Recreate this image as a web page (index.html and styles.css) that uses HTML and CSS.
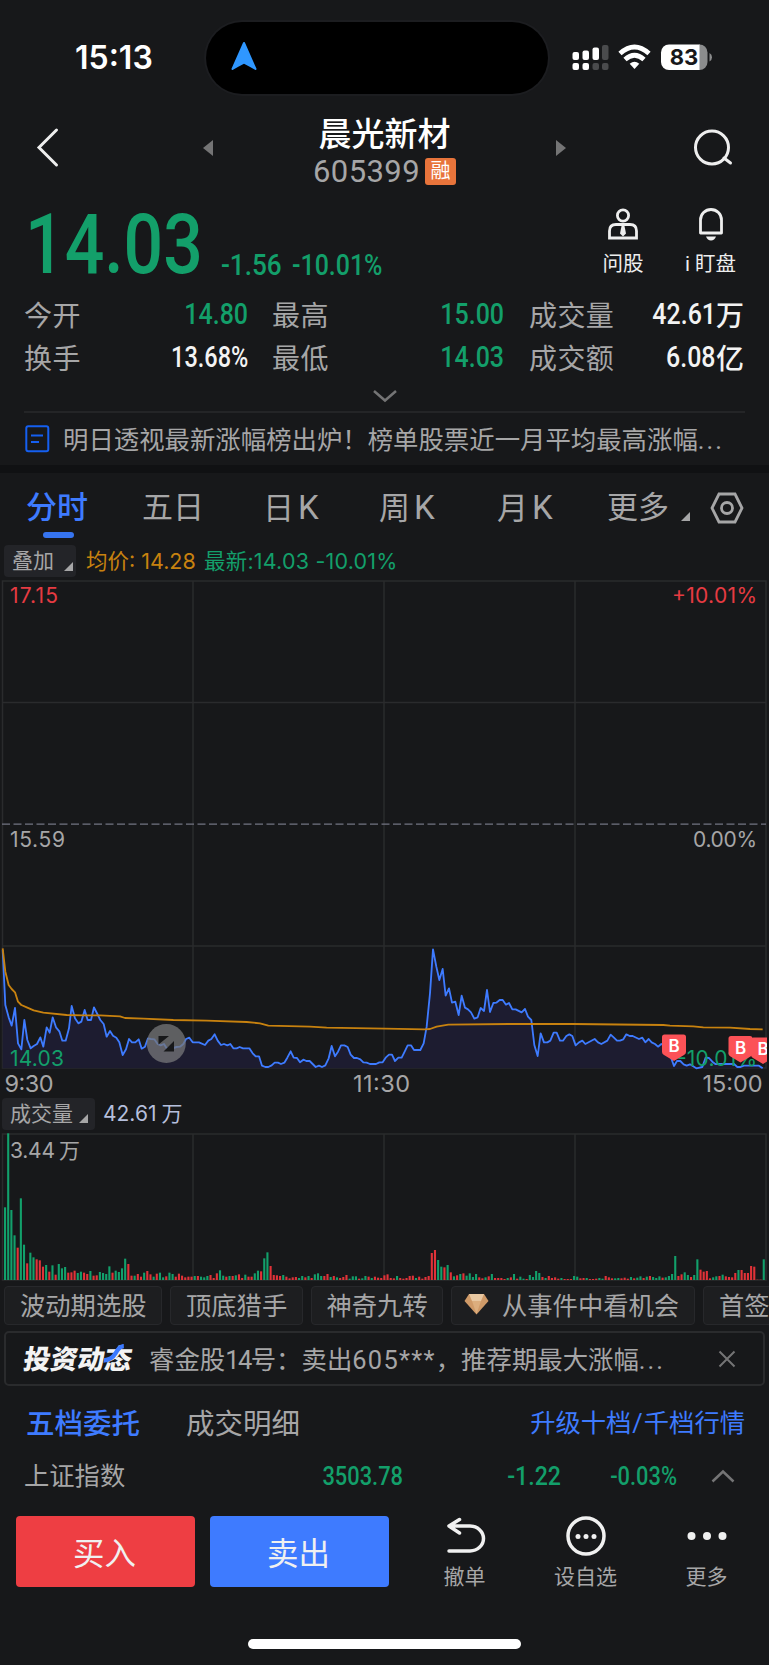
FILE: index.html
```html
<!DOCTYPE html>
<html lang="zh-CN">
<head>
  <meta charset="UTF-8">
  <meta name="viewport" content="width=device-width, initial-scale=1.0">
  <title>晨光新材 605399</title>
  <link rel="stylesheet" href="styles.css">
</head>
<body>
  <div class="status-bar">
    <div class="time">15:13</div>
    <div class="island">
      <svg width="26" height="30" viewBox="0 0 26 30"><path d="M13 2 L24.5 28 Q19 24.500 13 21.500 Q7 24.500 1.500 28 Z" fill="#2f97ff" stroke="#2f97ff" stroke-width="2" stroke-linejoin="round"/></svg>
    </div>
    <svg class="status-icons" width="142" height="30" viewBox="0 0 142 30">
      <g fill="#fff">
        <rect x="1.500" y="9" width="6.500" height="8" rx="2"/>
        <rect x="11.500" y="7.500" width="6.500" height="9.500" rx="2"/>
        <rect x="21.500" y="4.500" width="6.500" height="12.500" rx="2"/>
        <rect x="1.500" y="20" width="6.500" height="7" rx="2"/>
        <rect x="11.500" y="20" width="6.500" height="7" rx="2"/>
      </g>
      <g fill="#4a4b4d">
        <rect x="31" y="2" width="6.500" height="15" rx="2"/>
        <rect x="21.500" y="20" width="6.500" height="7" rx="2"/>
        <rect x="31" y="20" width="6.500" height="7" rx="2"/>
      </g>
      <g fill="none" stroke="#fff" stroke-width="4.800">
        <path d="M49 10.500 Q63.500 -2.500 78 10.500"/>
        <path d="M54 16.500 Q63.500 8 73 16.500"/>
      </g>
      <path d="M58.700 20.800 Q63.500 16.600 68.300 20.800 L63.500 26 Z" fill="#fff"/>
      <path d="M98 1.500 h31 v25.500 h-31 a8 8 0 0 1 -8 -8 v-9.500 a8 8 0 0 1 8 -8z" fill="#fff"/>
      <path d="M128.500 1.500 a8 8 0 0 1 8 8 v9.500 a8 8 0 0 1 -8 8z" fill="#8b8c8d"/>
      <path d="M138.500 10 q2.500 1.500 2.500 4.300 q0 2.800 -2.500 4.300z" fill="#8b8c8d"/>
      <text class="battery" x="113" y="22.300" text-anchor="middle">83</text>
    </svg>
  </div>

  <div class="header">
    <svg class="back" width="24" height="42" viewBox="0 0 24 42"><path d="M21.500 4 L4 21.500 L21.500 39"/></svg>
    <svg class="prev" width="10" height="18" viewBox="0 0 10 18"><path d="M10 1 L0 9 L10 17Z"/></svg>
    <div class="title">
      <h1>晨光新材</h1>
      <div class="code">605399<span class="badge">融</span></div>
    </div>
    <svg class="next" width="10" height="18" viewBox="0 0 10 18"><path d="M0 1 L10 9 L0 17Z"/></svg>
    <svg class="search" width="44" height="40" viewBox="0 0 44 40"><circle cx="20" cy="19.500" r="16.500"/><path d="M32 30 L38.500 35"/></svg>
  </div>

  <div class="quote">
    <span class="price">14.03</span>
    <span class="change">-1.56</span>
    <span class="percent">-10.01%</span>
    <div class="tool ask">
      <svg width="34" height="36" viewBox="0 0 34 36">
        <g fill="none" stroke="#eee" stroke-width="2.800">
          <circle cx="17" cy="9.500" r="5.600"/>
          <path d="M3.500 32 V25 Q3.500 18.500 10 18.500 H24 Q30.500 18.500 30.500 25 V32 Z"/>
        </g>
        <path d="M15.500 20 h3 l1.500 7.500 l-3 3 l-3 -3z" fill="#eee"/>
      </svg>
      <span>问股</span>
    </div>
    <div class="tool watch">
      <svg width="34" height="36" viewBox="0 0 34 36">
        <path d="M6.500 27 V14 a10.500 10.500 0 0 1 21 0 V27 Z" fill="none" stroke="#eee" stroke-width="2.800" stroke-linejoin="round"/>
        <path d="M12 30.500 h10 q-1.500 4 -5 4 t-5 -4z" fill="#eee"/>
      </svg>
      <span>i<i>盯盘</i></span>
    </div>
  </div>

  <div class="stats">
    <div class="stat"><label>今开</label><b class="green">14.80</b></div>
    <div class="stat"><label>最高</label><b class="green">15.00</b></div>
    <div class="stat"><label>成交量</label><b>42.61</b><i>万</i></div>
    <div class="stat"><label>换手</label><b class="tight">13.68%</b></div>
    <div class="stat"><label>最低</label><b class="green">14.03</b></div>
    <div class="stat"><label>成交额</label><b>6.08</b><i>亿</i></div>
  </div>
  <div class="expand">
    <svg width="26" height="14" viewBox="0 0 26 14"><path d="M2 2 L13 11.500 L24 2"/></svg>
  </div>

  <div class="notice">
    <svg width="25" height="28" viewBox="0 0 25 28" fill="none" stroke="#155ff0" stroke-width="2"><rect x="1.300" y="1.300" width="22" height="25" rx="2"/><path d="M6 10.500 H18 M6 17 H14"/></svg>
    <span>明日透视最新涨幅榜出炉！榜单股票近一月平均最高涨幅<span class="dots">...</span></span>
  </div>
  <div class="band"></div>

  <div class="tabs">
    <div class="tab active">分时</div>
    <div class="tab">五日</div>
    <div class="tab">日<em>K</em></div>
    <div class="tab">周<em>K</em></div>
    <div class="tab">月<em>K</em></div>
    <div class="tab">更多<u class="corner"></u></div>
    <svg width="34" height="32" viewBox="0 0 34 32"><path d="M9 2 H25 L32 16 L25 30 H9 L2 16 Z"/><circle cx="17" cy="16" r="5.500"/></svg>
  </div>

  <div class="legend">
    <div class="pill">叠加<u class="corner"></u></div>
    <span class="avg">均价: 14.28</span>
    <span class="last">最新:14.03 -10.01%</span>
  </div>

  <svg class="chart" width="767" height="519" viewBox="0 578 767 519">
    <g class="grid">
      <rect x="2.500" y="581" width="763.500" height="487"/>
      <path d="M193 581 V1068 M384 581 V1068 M575 581 V1068 M2 702.500 H766 M2 946 H766"/>
    </g>
    <path class="dash" d="M2 824.200 H766"/>
    <g transform="translate(0 930) scale(.33333)">
      <polygon id="area"/>
      <polyline id="priceLine"/>
      <polyline id="avgLine"/>
    </g>
    <g class="axis">
      <text x="10" y="603" class="up" textLength="48">17.15</text>
      <text x="672" y="603" class="up" textLength="85">+10.01%</text>
      <text x="10" y="847" textLength="55">15.59</text>
      <text x="693" y="847" textLength="64">0.00%</text>
      <text x="10" y="1065.500" class="down" textLength="54">14.03</text>
      <text x="677" y="1065.500" class="down" textLength="80">-10.01%</text>
    </g>
    <g>
      <circle cx="166.300" cy="1043.500" r="19.500" fill="#77777a" fill-opacity=".75"/>
      <path d="M158.500 1036 h10.500 l-10.500 8.500z M174 1041 v10.500 h-10.500z" fill="#17181a"/>
    </g>
    <g id="markers"></g>
    <g class="hours">
      <text x="4.500" y="1092" textLength="49">9:30</text>
      <text x="353" y="1092" textLength="57">11:30</text>
      <text x="702.500" y="1092" textLength="60">15:00</text>
    </g>
  </svg>

  <div class="legend volume-legend">
    <div class="pill wide">成交量<u class="corner"></u></div>
    <span class="amount">42.61<span>万</span></span>
  </div>
  <svg class="chart" width="767" height="151" viewBox="0 1131 767 151">
    <g class="grid">
      <rect x="2.500" y="1134" width="763.500" height="146"/>
      <path d="M193 1134 V1280 M384 1134 V1280 M575 1134 V1280"/>
    </g>
    <g id="bars"></g>
    <g class="axis">
      <text x="10" y="1157.500" textLength="45">3.44</text>
      <text x="59" y="1157.500">万</text>
    </g>
  </svg>

  <div class="chips">
    <div class="chip">波动期选股</div>
    <div class="chip">顶底猎手</div>
    <div class="chip">神奇九转</div>
    <div class="chip gem">
      <svg width="25" height="22" viewBox="0 0 25 22"><path d="M5 1 H20 L24.500 8 L12.500 21.500 L.5 8Z" fill="#cf9a68"/><path d="M5 1 H20 L17 8 H8Z" fill="#e8c8a2"/><path d="M8 8 H17 L12.500 21Z" fill="#dcae7e"/></svg>
      从事件中看机会
    </div>
    <div class="chip">首签</div>
  </div>

  <div class="feed">
    <div class="feed-logo">投资动态
      <svg width="22" height="20" viewBox="0 0 22 20"><path d="M0 16.500 Q8 16 11 9 Q13 3 18 2" fill="none" stroke="#3b79ff" stroke-width="4.500"/></svg>
    </div>
    <p>睿金股<span class="narrow">14</span>号：卖出<span class="loose">605***</span>，推荐期最大涨幅<span class="dots">...</span></p>
    <svg width="18" height="18" viewBox="0 0 18 18"><path d="M1.500 1.500 L16.500 16.500 M16.500 1.500 L1.500 16.500"/></svg>
  </div>

  <div class="orders">
    <strong>五档委托</strong>
    <span>成交明细</span>
    <a>升级十档<s>/</s>千档行情</a>
  </div>

  <div class="index-row">
    <span class="name">上证指数</span>
    <b class="value">3503.78</b>
    <b class="diff">-1.22</b>
    <b class="rate">-0.03%</b>
    <svg width="24" height="14" viewBox="0 0 24 14"><path d="M1.500 12.500 L12 2.500 L22.500 12.500"/></svg>
  </div>

  <div class="actions">
    <button class="buy">买入</button>
    <button class="sell">卖出</button>
    <div class="action">
      <svg width="44" height="44" viewBox="0 0 44 44"><path d="M16.500 5.500 L6 12 L16.500 19 M7 12 H27 A13.500 12.500 0 0 1 27 37 H6" fill="none" stroke="#f0f0f0" stroke-width="3.500" stroke-linecap="round" stroke-linejoin="round"/></svg>
      <span>撤单</span>
    </div>
    <div class="action">
      <svg width="44" height="44" viewBox="0 0 44 44"><circle cx="22" cy="22" r="18" fill="none" stroke="#f0f0f0" stroke-width="3.500"/><g fill="#f0f0f0"><circle cx="14" cy="22.500" r="2.500"/><circle cx="22" cy="22.500" r="2.500"/><circle cx="30" cy="22.500" r="2.500"/></g></svg>
      <span>设自选</span>
    </div>
    <div class="action">
      <svg width="44" height="44" viewBox="0 0 44 44" fill="#f0f0f0"><circle cx="6.500" cy="22" r="4"/><circle cx="22" cy="22" r="4"/><circle cx="37.500" cy="22" r="4"/></svg>
      <span>更多</span>
    </div>
  </div>
  <div class="home-bar"></div>

  <script>
    // x,y pairs in thirds of a pixel
    const price = '8,60 16,225 26,262 35,287 45,234 54,340 64,358 73,270 82,330 92,355 101,348 111,342 121,322 130,350 140,292 149,308 158,262 168,292 178,304 187,332 197,332 207,295 215,228 225,265 235,280 244,275 254,240 263,270 273,270 282,232 292,252 301,270 311,282 320,320 330,303 339,317 349,323 358,337 368,375 378,358 387,327 396,337 406,337 416,328 425,356 435,350 444,325 453,327 463,328 473,342 482,346 492,342 501,356 511,351 520,354 530,351 540,350 550,342 558,327 568,323 578,337 597,337 615,345 625,332 634,327 644,313 653,332 663,345 672,342 682,346 691,342 700,355 710,355 719,351 729,355 748,355 758,370 767,379 777,379 786,407 796,411 805,411 815,406 824,398 834,398 843,402 853,398 862,383 872,364 881,383 891,384 900,397 910,389 919,393 929,393 947,411 957,407 966,411 976,406 986,385 995,348 1005,379 1014,365 1023,346 1033,346 1043,351 1052,374 1062,384 1071,384 1081,388 1090,397 1100,398 1110,402 1128,402 1138,397 1148,397 1157,383 1167,374 1176,374 1185,393 1195,383 1205,383 1214,365 1223,346 1233,346 1242,360 1261,360 1271,340 1280,290 1290,190 1299,58 1309,110 1318,150 1328,117 1337,197 1347,175 1356,218 1366,215 1376,255 1385,197 1395,233 1404,238 1413,247 1423,266 1433,262 1442,234 1452,243 1461,180 1470,246 1480,219 1489,218 1499,210 1508,210 1518,224 1527,219 1537,238 1547,238 1565,247 1575,237 1584,260 1594,270 1603,345 1613,378 1622,310 1632,337 1642,337 1651,332 1661,308 1670,308 1680,332 1689,332 1699,318 1708,313 1717,318 1727,346 1737,337 1747,332 1756,342 1784,327 1794,337 1804,342 1822,332 1832,314 1841,322 1851,332 1860,332 1870,328 1879,313 1889,318 1898,318 1917,327 1927,323 1936,337 1946,327 1955,337 1965,342 1974,350 1984,342 1993,346 2012,380 2022,408 2031,393 2041,393 2051,403 2060,407 2070,403 2089,415 2107,411 2117,383 2127,384 2137,395 2146,402 2202,402 2212,411 2222,411 2232,407 2277,407 2288,415';
    const average = '8,55 16,125 26,165 35,177 45,187 54,215 64,225 82,233 101,241 130,248 200,255 250,256 300,256 360,259 375,264 430,266 520,270 620,272 740,276 780,280 805,287 930,290 980,293 1155,296 1275,298 1290,297 1310,290 1345,284 1527,282 1720,282 1990,285 2010,287 2080,289 2110,292 2190,293 2250,297 2288,298';
    document.getElementById('priceLine').setAttribute('points', price);
    document.getElementById('avgLine').setAttribute('points', average);
    document.getElementById('area').setAttribute('points', price + ' 2288,415 8,415');

    // height + colour for each minute
    const volumes = '218g 440g 210g 134g 97r 245g 106g 50r 82g 68g 62r 59r 40r 45g 25r 44g 16r 48g 35g 39g 22r 23r 28r 21g 25g 22r 18r 27g 13r 14r 24g 21g 18g 41g 22r 28g 24g 35g 64g 48r 13r 13g 18r 10r 22g 27r 17r 10g 19r 22g 8g 11r 22g 18g 10r 19r 13r 8r 10r 10r 12g 12r 10g 8g 12g 15r 6r 20r 29g 13g 10r 12g 12r 14g 17r 6r 16g 10r 10r 20g 28g 26r 65g 83g 42r 15r 14r 12r 15g 10r 5r 8r 9r 6g 12g 8r 12g 6r 17g 20g 12g 12r 18r 9g 12r 8g 6r 9r 15r 4g 11g 11g 4r 5g 12g 10r 6g 10r 7r 6r 14r 17r 6r 5r 12g 6r 4r 6r 12r 13r 6g 10r 4r 9r 12r 81r 90r 60g 40g 38r 45g 23r 11g 14r 18g 20r 13g 20g 9g 18g 8r 5r 8g 11r 18g 6r 6r 6r 3r 6g 8r 18g 4r 10g 4g 3r 15g 9g 27g 21g 9r 6g 12r 6r 8r 4r 6g 3r 3r 3r 12g 10g 5r 6r 6g 3r 3r 4r 6g 4g 12r 8r 5r 5g 6g 5r 7r 4r 9g 5r 7g 11g 6r 10g 12r 9g 6g 11g 7r 8g 12g 18g 72g 12r 17r 23g 15g 9r 15g 62g 31r 25r 27r 5r 8g 11g 12r 16g 11r 9r 8r 21r 30g 30r 21r 21r 42r 40r 1r 1r 62g'.split(' ');
    const step = 758.7 / (volumes.length - 1);
    document.getElementById('bars').innerHTML = volumes.map((v, i) => {
      const h = parseInt(v, 10) / 3;
      const color = v.endsWith('g') ? '#12a06b' : '#e13238';
      return `<rect x="${(4 + i * step).toFixed(2)}" y="${(1280 - h).toFixed(2)}" width="2.1" height="${h.toFixed(2)}" fill="${color}"/>`;
    }).join('');

    const buys = [[674, 1034.6], [740.5, 1036], [763, 1037.5]];
    document.getElementById('markers').innerHTML = buys.map(([x, y]) =>
      `<path d="M${x - 9.500} ${y} h19 q2.500 0 2.500 2.500 v15 q0 2 -2 3 l-10 6 l-10 -6 q-2 -1 -2 -3 v-15 q0 -2.500 2.500 -2.500z" fill="#fc5257"/>
       <text class="marker" x="${x}" y="${y + 17.500}" text-anchor="middle">B</text>`
    ).join('');
  </script>
</body>
</html>
```
FILE: styles.css
```css
* {
  box-sizing: border-box;
}

body {
  margin: 0;
  width: 769px;
  height: 1665px;
  overflow: hidden;
  background-color: #17181a;
  color: #a6a6a7;
  font-family: Roboto, "Noto Sans CJK SC", sans-serif;
}

svg {
  display: block;
  flex: none;
}

/* status bar */
.status-bar {
  display: flex;
  height: 110px;
  padding-top: 22px;
}

.time {
  width: 206px;
  padding-left: 75px;
  font: 600 32px/72px Inter, sans-serif;
  color: #fff;
}

.island {
  width: 342px;
  height: 72px;
  padding: 19px 0 0 25px;
  border-radius: 36px;
  background-color: #000;
  box-shadow: 0 0 0 2px #1c1d20;
}

.status-icons {
  margin: 21px 0 0 23px;
}

.battery {
  font: 700 22px Inter, sans-serif;
  fill: #17181a;
}

/* header */
.header {
  display: flex;
  height: 90px;
  padding-left: 35px;
}

.back {
  margin: 16px 144px 0 0;
}

.back path,
.search {
  fill: none;
  stroke: #eee;
  stroke-width: 3;
  stroke-linecap: round;
}

.prev,
.next {
  margin-top: 29px;
  fill: #747475;
}

.title {
  width: 343px;
  text-align: center;
}

.title h1 {
  margin: 6px 0 0;
  font-size: 33px;
  font-weight: 500;
  line-height: 38px;
  color: #fff;
}

.code {
  display: flex;
  justify-content: center;
  align-items: center;
  height: 34px;
  font-size: 31px;
  font-weight: 400;
  letter-spacing: 0.4px;
}

.badge {
  width: 31px;
  height: 27px;
  margin-left: 5px;
  border-radius: 3px;
  background-color: #e8743b;
  color: #fff;
  font-size: 20px;
  letter-spacing: 0;
  line-height: 26px;
}

.search {
  margin: 18px 0 0 126px;
}

/* current price */
.quote {
  display: flex;
  height: 93px;
  padding-left: 25px;
  color: #139f6a;
  font-weight: 500;
  white-space: nowrap;
}

.price {
  width: 196px;
  font-size: 84px;
  line-height: 89px;
  transform: scaleX(.83);
  transform-origin: left;
}

.change,
.percent {
  padding-top: 48px;
  font-size: 29px;
  line-height: 35px;
  transform: scaleX(.9);
  transform-origin: left;
}

.change {
  width: 71px;
}

.percent {
  width: 289px;
  transform: scaleX(.86);
}

.tool {
  display: flex;
  flex-direction: column;
  align-items: center;
  width: 84px;
  padding-top: 6px;
  color: #eee;
  font-size: 20.5px;
  font-weight: 400;
}

.tool span {
  line-height: 30px;
  margin-top: 7px;
}

.tool.watch {
  width: 91px;
}

.tool i {
  margin-left: 5px;
  font-style: normal;
}

/* stats */
.stats {
  display: grid;
  grid-template-columns: 224px 231px 215px;
  grid-auto-rows: 43px;
  column-gap: 25px;
  height: 92px;
  padding-left: 24px;
  margin-top: -1px;
  margin-bottom: 1px;
}

.stat {
  display: flex;
  align-items: center;
  font-size: 28px;
}

.stat label {
  margin-right: auto;
  letter-spacing: 0.4px;
}

.stat:nth-child(3n+2) label {
  margin-left: -1px;
}

.stat b {
  font-size: 29px;
  font-weight: 500;
  color: #f3f3f3;
  transform: scaleX(.86);
  transform-origin: right;
}

.stat b.tight {
  transform: scaleX(.81);
}

.stat b.green {
  color: #139f6a;
}

.stat i {
  font-style: normal;
  font-weight: 500;
  color: #f3f3f3;
}

.expand {
  display: flex;
  justify-content: center;
  height: 26px;
  padding-top: 4px;
}

.expand svg,
.index-row svg,
.feed > svg {
  fill: none;
  stroke: #747475;
  stroke-width: 2.5;
}

.notice {
  display: flex;
  align-items: center;
  height: 54px;
  margin: 0 24px;
  border-top: 2px solid #242527;
  padding-left: 1px;
  font-size: 25.4px;
  white-space: nowrap;
}

.notice > span {
  margin-left: 13px;
  padding-bottom: 3px;
}

.dots {
  letter-spacing: 2px;
}

.band {
  height: 8px;
  background-color: #101113;
}

/* period tabs */
.tabs {
  display: flex;
  height: 70px;
  padding-left: 26px;
  font-size: 31px;
  line-height: 70px;
}

.tab {
  position: relative;
  width: 118px;
  white-space: nowrap;
}

.tab:nth-child(1) {
  width: 116px;
}

.tab:nth-child(2) {
  width: 121px;
}

.tab:nth-child(3) {
  width: 116px;
}

.tab:nth-child(5) {
  width: 110px;
}

.tab:nth-child(6) {
  width: 103px;
}

.tab em {
  margin-left: 4px;
  font-size: 33px;
  font-style: normal;
}

.tab.active {
  color: #3e7bff;
  font-weight: 500;
}

.tab.active::after {
  content: "";
  position: absolute;
  left: 17px;
  top: 59px;
  width: 31px;
  height: 6px;
  border-radius: 3px;
  background-color: #3674f0;
}

.tabs svg {
  margin-top: 19px;
  fill: none;
  stroke: #a6a6a7;
  stroke-width: 2.8;
}

.corner {
  display: inline-block;
  border-left: 9px solid transparent;
  border-bottom: 9px solid #a6a6a7;
}

.tab .corner {
  margin-left: 12px;
  margin-bottom: -3px;
}

/* chart legends */
.legend {
  display: flex;
  height: 35px;
  padding: 2px 0 0 4px;
  font-family: Inter, "Noto Sans CJK SC", sans-serif;
  font-size: 21px;
  line-height: 32px;
  white-space: nowrap;
}

.pill {
  width: 72px;
  height: 32px;
  padding-left: 8px;
  border-radius: 4px;
  background-color: #232428;
}

.pill .corner {
  margin-left: 10px;
  margin-bottom: -3px;
}

.avg {
  width: 128px;
  padding-left: 10px;
  font-size: 21.5px;
  color: #c8820f;
}

.last {
  font-size: 21.5px;
  letter-spacing: 0.2px;
  color: #139f6a;
}

.volume-legend {
  height: 34px;
  padding: 1px 0 0 2px;
}

.pill.wide {
  width: 93px;
}

.pill.wide .corner {
  margin-left: 6px;
  margin-bottom: -2px;
}

.amount {
  padding-left: 8px;
  color: #b5bfdc;
}

.amount span {
  margin-left: 5px;
}

/* charts */
.grid {
  fill: none;
  stroke: #2a2b2d;
  stroke-width: 1.5;
}

.dash {
  stroke: #737482;
  stroke-width: 1.3;
  stroke-dasharray: 8 3.5;
}

#area {
  fill: #1d1c30;
}

#priceLine,
#avgLine {
  fill: none;
  stroke: #3e7bff;
  stroke-width: 5.5;
  stroke-linejoin: round;
}

#avgLine {
  stroke: #c8820f;
}

.axis,
.hours {
  font-family: Inter, "Noto Sans CJK SC", sans-serif;
  font-size: 21px;
  fill: #a6a6a7;
}

.hours {
  font-size: 23.5px;
}

.up {
  fill: #e63b42;
}

.down {
  fill: #139f6a;
}

.marker {
  font: 600 17px Inter, sans-serif;
  fill: #fff;
}

/* strategy chips */
.chips {
  display: flex;
  gap: 8px;
  height: 49px;
  padding: 4px 0 0 4px;
  overflow: hidden;
}

.chip {
  display: flex;
  flex: none;
  align-items: center;
  width: 132.5px;
  height: 39px;
  padding: 0 0 3px 15px;
  border: 1px solid #27282b;
  border-radius: 4px;
  background-color: #1d1e20;
  font-size: 25.3px;
  white-space: nowrap;
}

.chip:first-child {
  width: 158px;
}

.chip.gem {
  width: 244px;
  padding-left: 12px;
}

.gem svg {
  margin-right: 13px;
}

.feed {
  display: flex;
  align-items: center;
  width: 761px;
  height: 55px;
  margin-left: 4px;
  padding: 0 0 2px 18px;
  border: 2px solid #2a2b2d;
  border-radius: 5px;
  font-size: 25.4px;
}

.feed-logo {
  position: relative;
  width: 110px;
  font-size: 27px;
  font-weight: 900;
  color: #f3f3f3;
  transform: skewX(-9deg);
  white-space: nowrap;
}

.feed-logo svg {
  position: absolute;
  left: 80px;
  top: 6px;
}

.feed p {
  width: 569px;
  margin: 0 0 0 15px;
  white-space: nowrap;
}

.narrow {
  letter-spacing: -1.5px;
}

.loose {
  letter-spacing: 1.3px;
}

.feed > svg {
  margin-top: 2px;
  stroke-width: 2;
}

.orders {
  display: flex;
  align-items: center;
  height: 74px;
  padding: 0 24px 4px 26px;
  font-size: 28.5px;
}

.orders strong {
  width: 160px;
  font-weight: 500;
  color: #3e7bff;
}

.orders a {
  margin-left: auto;
  color: #3e7bff;
  font-size: 25.3px;
}

.orders s {
  padding: 0 1px;
  text-decoration: none;
}

.index-row {
  display: flex;
  align-items: center;
  height: 34px;
  padding: 0 0 2px 24px;
  font-size: 25.3px;
}

.index-row b {
  color: #139f6a;
  font-size: 26px;
  font-weight: 500;
  transform: scaleX(.84);
  transform-origin: right;
  text-align: right;
}

.index-row .name {
  width: 180px;
  padding-bottom: 4px;
}

.value {
  width: 199px;
}

.index-row .diff {
  width: 158px;
  transform: scaleX(.89);
}

.rate {
  width: 116px;
}

.index-row svg {
  margin-left: 34px;
}

/* bottom actions */
.actions {
  display: flex;
  height: 123px;
  padding: 22px 0 0 16px;
}

.actions button {
  width: 179px;
  height: 71px;
  margin: 0 15px 0 0;
  padding: 0 2px 2px 0;
  border: none;
  border-radius: 4px;
  color: #f0f0f0;
  font-family: inherit;
  font-size: 31.5px;
}

.buy {
  background-color: #ee3e43;
}

.sell {
  background-color: #3e7bff;
}

.action {
  display: flex;
  flex-direction: column;
  align-items: center;
  width: 121px;
  font-size: 21px;
}

.action svg {
  margin-top: -2px;
}

.action span {
  line-height: 30px;
  margin-top: 4px;
}

.home-bar {
  width: 273px;
  height: 10px;
  margin: 22px 0 0 248px;
  border-radius: 5px;
  background-color: #fff;
}
```
